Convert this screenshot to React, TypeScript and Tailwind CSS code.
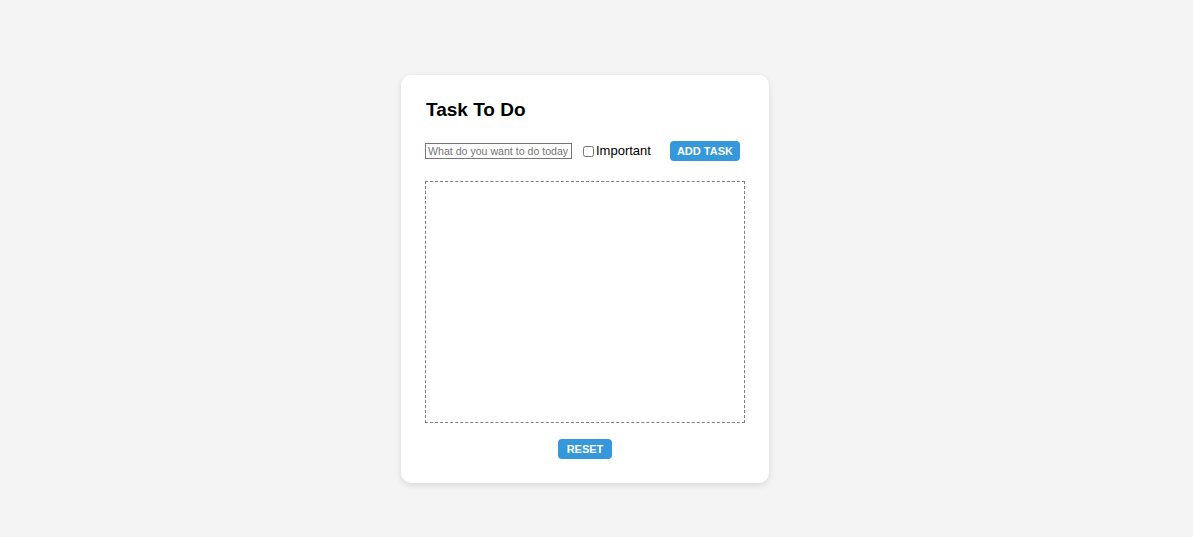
export default function App() {
  return (
    <div
      className="min-h-[537px] w-full bg-[#f4f4f4] pl-[401px] pt-[75px]"
      style={{ fontFamily: '"Liberation Sans", Arial, sans-serif' }}
    >
      <div className="w-[368px] rounded-[10px] bg-white px-6 pt-6 pb-6 shadow-[0_2px_6px_rgba(0,0,0,0.12)]">
        <h2 className="ml-px text-[19px] font-bold leading-[21px] text-black">Task To Do</h2>

        <div className="mt-[21px] flex h-5 items-center">
          <input
            type="text"
            placeholder="What do you want to do today"
            className="h-4 w-[147px] border border-[#767676] px-[2px] text-[10.6px] text-black placeholder:text-[#757575] outline-none"
          />
          <label className="ml-[11px] flex items-center text-[13px] text-black">
            <input type="checkbox" className="m-0 h-[11px] w-[11px]" />
            <span className="ml-[2px]">Important</span>
          </label>
          <button className="ml-[19px] h-5 rounded-[4px] bg-[#3498db] px-[7px] text-[11px] font-bold text-white">
            ADD TASK
          </button>
        </div>

        <div className="mt-5 h-[242px] w-80 border border-dashed border-[#808080]"></div>

        <div className="mt-4 flex justify-center">
          <button className="h-5 rounded-[4px] bg-[#3498db] px-[9px] text-[11px] font-bold text-white">
            RESET
          </button>
        </div>
      </div>
    </div>
  );
}
